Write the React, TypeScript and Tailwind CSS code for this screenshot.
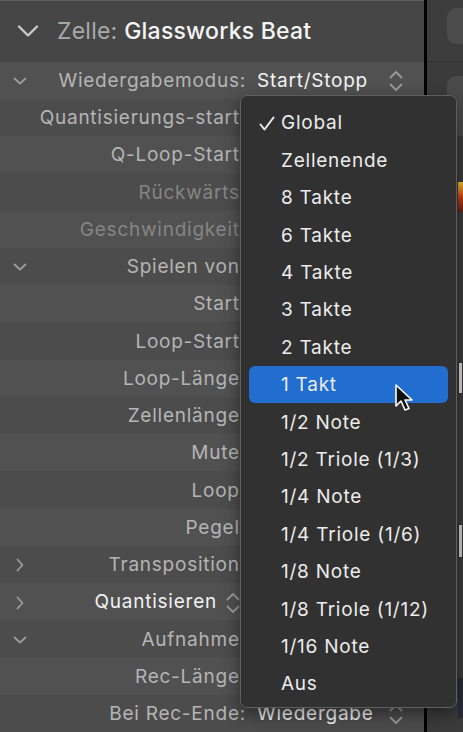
import React from 'react';

type Row = {
  chevron?: 'down' | 'right';
  label: string;
  dim?: boolean;
  popup?: boolean;
  value?: string;
};

const rows: Row[] = [
  { chevron: 'down', label: 'Wiedergabemodus:', value: 'Start/Stopp' },
  { label: 'Quantisierungs-start:' },
  { label: 'Q-Loop-Start:' },
  { label: 'Rückwärts:', dim: true },
  { label: 'Geschwindigkeit:', dim: true },
  { chevron: 'down', label: 'Spielen von:' },
  { label: 'Start:' },
  { label: 'Loop-Start:' },
  { label: 'Loop-Länge:' },
  { label: 'Zellenlänge:' },
  { label: 'Mute:' },
  { label: 'Loop:' },
  { label: 'Pegel:' },
  { chevron: 'right', label: 'Transposition:' },
  { chevron: 'right', label: 'Quantisieren', popup: true },
  { chevron: 'down', label: 'Aufnahme:' },
  { label: 'Rec-Länge:' },
  { label: 'Bei Rec-Ende:', value: 'Wiedergabe' },
];

const menuItems = [
  'Global',
  'Zellenende',
  '8 Takte',
  '6 Takte',
  '4 Takte',
  '3 Takte',
  '2 Takte',
  '1 Takt',
  '1/2 Note',
  '1/2 Triole (1/3)',
  '1/4 Note',
  '1/4 Triole (1/6)',
  '1/8 Note',
  '1/8 Triole (1/12)',
  '1/16 Note',
  'Aus',
];

const Chevron: React.FC<{ dir: 'down' | 'right' }> = ({ dir }) => (
  <svg width="16" height="16" viewBox="0 0 16 16" fill="none">
    {dir === 'down' ? (
      <polyline points="2.5,5.5 8,10.5 13.5,5.5" stroke="#9c9c9c" strokeWidth="1.8" strokeLinecap="round" strokeLinejoin="round" />
    ) : (
      <polyline points="5.5,2.5 10.5,8 5.5,13.5" stroke="#9c9c9c" strokeWidth="1.8" strokeLinecap="round" strokeLinejoin="round" />
    )}
  </svg>
);

const UpDown: React.FC<{ color?: string }> = ({ color = '#9a9a9a' }) => (
  <svg width="16" height="24" viewBox="0 0 16 24" fill="none">
    <polyline points="2.5,8.5 8,3 13.5,8.5" stroke={color} strokeWidth="1.8" strokeLinecap="round" strokeLinejoin="round" />
    <polyline points="2.5,15.5 8,21 13.5,15.5" stroke={color} strokeWidth="1.8" strokeLinecap="round" strokeLinejoin="round" />
  </svg>
);

const App: React.FC = () => {
  return (
    <div
      className="relative w-[463px] h-[732px] overflow-hidden bg-[#3b3b3b] flex"
      style={{ fontFamily: 'Inter, "Noto Sans", sans-serif' }}
    >
      {/* inspector panel */}
      <div className="w-[424px] flex flex-col shrink-0">
        <div className="h-[62px] bg-[#464646] border-t border-[#5c5c5c] flex items-center">
          <div className="w-[52px] flex justify-center pl-1">
            <svg width="22" height="14" viewBox="0 0 22 14" fill="none">
              <polyline points="2,2.5 11,11.5 20,2.5" stroke="#c9c9c9" strokeWidth="2.4" strokeLinecap="round" strokeLinejoin="round" />
            </svg>
          </div>
          <div className="text-[23px] ml-[5px] tracking-[0.01em] whitespace-nowrap">
            <span className="text-[#a9a9a9]">Zelle: </span>
            <span className="text-[#f4f4f4] font-medium">Glassworks Beat</span>
          </div>
        </div>
        {rows.map((row, i) => (
          <div
            key={row.label}
            className={`h-[37.25px] flex items-center shrink-0 pt-[2px] ${i % 2 === 0 ? 'bg-[#515151]' : 'bg-[#4c4c4c]'}`}
          >
            <div className="w-[40px] flex justify-center">
              {row.chevron && <Chevron dir={row.chevron} />}
            </div>
            <div className="w-[206px] flex items-center justify-end gap-[8px] whitespace-nowrap">
              <span
                className={`text-[19px] tracking-[0.04em] ${
                  row.popup ? 'text-[#f2f2f2]' : row.dim ? 'text-[#858585]' : 'text-[#b5b5b5]'
                }`}
              >
                {row.label}
              </span>
              {row.popup && (
                <span className="mr-[5px]">
                  <UpDown />
                </span>
              )}
            </div>
            {row.value && (
              <div className="flex-1 flex items-center pl-[11px] pr-[20px] whitespace-nowrap">
                <span className="flex-1 text-[19px] tracking-[0.04em] text-[#f4f4f4]">{row.value}</span>
                <UpDown />
              </div>
            )}
          </div>
        ))}
      </div>

      {/* divider */}
      <div className="w-[3px] bg-black shrink-0" />

      {/* right panel strip */}
      <div className="flex-1 flex flex-col">
        <div className="h-[62px] bg-[#3d3d3d] border-b border-[#333] pt-[8px] pl-[20px]">
          <div className="h-[36px] rounded-l-[9px] bg-[#4b4b4b]" />
        </div>
        <div className="pt-[14px] pl-[20px] h-[120px]">
          <div className="h-[60px] rounded-l-[9px] bg-[#4b4b4b]" />
        </div>
        <div className="flex flex-col items-end">
          <div className="w-[5px] h-[30px] bg-gradient-to-b from-[#f0c030] via-[#d04010] to-[#602010]" />
          <div className="w-[5px] h-[150px]" />
          <div className="w-[5px] h-[32px] bg-[#d8d8d8] border border-[#333]" />
          <div className="w-[5px] h-[130px]" />
          <div className="w-[5px] h-[34px] bg-[#cfcfcf] border border-[#333]" />
          <div className="w-[5px] h-[120px]" />
          <div className="w-[5px] h-[40px] bg-[#2a2a3a]" />
        </div>
      </div>

      {/* popup menu */}
      <div className="absolute left-[240px] top-[95px] w-[217px] h-[613px] rounded-[7px] bg-[#313131] border border-[#5e5e5e] shadow-[0_6px_18px_rgba(0,0,0,0.45)] pt-[8px] pb-[6px] px-[8px] flex flex-col">
        {menuItems.map((item, i) => {
          const active = item === '1 Takt';
          return (
            <div
              key={item}
              className={`h-[37.4px] shrink-0 flex items-center rounded-[6px] whitespace-nowrap pt-[2px] ${active ? 'bg-[#216ed0]' : ''}`}
            >
              <div className="w-[32px] flex justify-end pr-[6px]">
                {i === 0 && (
                  <svg width="16" height="16" viewBox="0 0 16 16" fill="none">
                    <polyline points="1.5,8.5 5.5,13.5 14.5,1.5" stroke="#ececec" strokeWidth="2" strokeLinecap="round" strokeLinejoin="round" />
                  </svg>
                )}
              </div>
              <span className="text-[19px] tracking-[0.04em] text-[#ececec]">{item}</span>
            </div>
          );
        })}
      </div>

      {/* mouse pointer */}
      <svg className="absolute left-[394px] top-[384px]" width="24" height="30" viewBox="0 0 24 30">
        <path
          d="M2 1 L2 22 L7 17 L11 26 L15 24.5 L11 16 L18 16 Z"
          fill="#111"
          stroke="#fff"
          strokeWidth="1.6"
          strokeLinejoin="round"
        />
      </svg>
    </div>
  );
};

export default App;
